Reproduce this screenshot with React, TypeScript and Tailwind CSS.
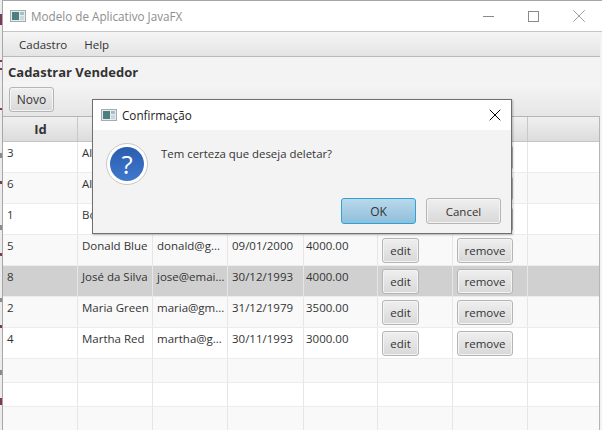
import { X } from 'lucide-react';

const sans = "font-['Open_Sans','Noto_Sans',sans-serif]";

// the first three rows sit behind the dialog, only the start of the name shows
const rows = [
  { id: '3', bg: 'bg-white', name: 'Al', mail: '', date: '', pay: '', hidden: true },
  { id: '6', bg: 'bg-[#f9f9f9]', name: 'Al', mail: '', date: '', pay: '', hidden: true },
  { id: '1', bg: 'bg-white', name: 'Bo', mail: '', date: '', pay: '', hidden: true },
  { id: '5', bg: 'bg-[#f9f9f9]', name: 'Donald Blue', mail: 'donald@g...', date: '09/01/2000', pay: '4000.00', hidden: false },
  { id: '8', bg: 'bg-[#d0d0d0]', name: 'José da Silva', mail: 'jose@emai...', date: '30/12/1993', pay: '4000.00', hidden: false },
  { id: '2', bg: 'bg-[#f9f9f9]', name: 'Maria Green', mail: 'maria@gm...', date: '31/12/1979', pay: '3500.00', hidden: false },
  { id: '4', bg: 'bg-white', name: 'Martha Red', mail: 'martha@g...', date: '30/11/1993', pay: '3000.00', hidden: false },
];

const colW = ['w-[75px]', 'w-[75px]', 'w-[75px]', 'w-[76px]', 'w-[74px]', 'w-[75px]', 'w-[75px]', 'flex-1'];

function FxButton({ label, className = '' }: { label: string; className?: string }) {
  return (
    <div
      className={`flex items-center justify-center rounded-[3px] border border-[#b5b5b5] bg-gradient-to-b from-[#efefef] to-[#d8d8d8] text-[#333] shadow-[inset_0_0_0_1px_#f4f4f4] ${className}`}
    >
      {label}
    </div>
  );
}

function AppIcon() {
  return (
    <svg width="16" height="12" viewBox="0 0 16 12">
      <rect x="0.5" y="0.5" width="15" height="11" fill="#e6ebec" stroke="#a3adb0" />
      <rect x="2" y="2" width="7" height="8" fill="#4d7f80" />
      <rect x="10" y="2" width="4" height="3" fill="#a9bccb" />
      <rect x="10" y="6" width="4" height="4" fill="#ccd6dc" />
    </svg>
  );
}

function Row({ row }: { row: (typeof rows)[number] }) {
  return (
    <div className={`flex h-[31px] ${row.bg} border-b border-[#ececec]`}>
      <div className={`${colW[0]} shrink-0 border-r border-[#e6e6e6] pl-1 pt-[2px]`}>{row.id}</div>
      <div className={`${colW[1]} shrink-0 overflow-hidden border-r border-[#e6e6e6] pl-1 pt-[2px] whitespace-nowrap`}>{row.name}</div>
      <div className={`${colW[2]} shrink-0 overflow-hidden border-r border-[#e6e6e6] pl-1 pt-[2px] whitespace-nowrap`}>{row.mail}</div>
      <div className={`${colW[3]} shrink-0 border-r border-[#e6e6e6] pl-1 pt-[2px] whitespace-nowrap`}>{row.date}</div>
      <div className={`${colW[4]} shrink-0 border-r border-[#e6e6e6] pl-[2px] pt-[2px]`}>{row.pay}</div>
      <div className={`${colW[5]} shrink-0 border-r border-[#e6e6e6] pl-1 pt-[3px]`}>
        {!row.hidden && <FxButton label="edit" className="h-[25px] w-[37px]" />}
      </div>
      <div className={`${colW[6]} shrink-0 border-r border-[#e6e6e6] pl-1 pt-[3px]`}>
        <FxButton label={row.hidden ? '' : 'remove'} className="h-[25px] w-[56px]" />
      </div>
      <div className="flex-1" />
    </div>
  );
}

function EmptyRow({ bg }: { bg: string }) {
  return (
    <div className={`flex h-[24px] ${bg} border-b border-[#ececec]`}>
      {colW.slice(0, 7).map((w, i) => (
        <div key={i} className={`${w} shrink-0 border-r border-[#e6e6e6]`} />
      ))}
    </div>
  );
}

export default function App() {
  return (
    <div className={`${sans} relative flex h-[430px] w-[602px] overflow-hidden bg-white text-[11.5px] leading-[17px] text-[#333]`}>
      {/* window behind, only a sliver shows */}
      <div className="flex w-[2px] shrink-0 flex-col bg-[#ececec]">
        <div className="mt-[14px] h-[11px] bg-[#7d3a55]" />
        <div className="mt-[35px] h-[2px] bg-[#7d3a55]" />
        <div className="mt-[6px] h-[2px] bg-[#7d3a55]" />
        <div className="mt-[38px] h-[2px] bg-[#7d3a55]" />
        <div className="mt-[43px] h-[5px] bg-[#8a8a8a]" />
        <div className="mt-[23px] h-[3px] bg-[#7d3a55]" />
        <div className="mt-[41px] h-[5px] bg-[#8a8a8a]" />
        <div className="mt-[23px] h-[3px] bg-[#7d3a55]" />
        <div className="mt-[42px] h-[4px] bg-[#8a8a8a]" />
        <div className="mt-[23px] h-[3px] bg-[#7d3a55]" />
        <div className="mt-[42px] h-[5px] bg-[#8a8a8a]" />
        <div className="mt-[23px] h-[7px] bg-[#7d3a55]" />
      </div>

      <div className="flex min-w-0 flex-1 flex-col border-t border-l border-[#a6a6a6]">
        {/* title bar */}
        <div className="flex h-[30px] shrink-0 items-center bg-white pl-[7px]">
          <AppIcon />
          <span className="ml-[5px] text-[11.7px] text-[#8e8e8e]">Modelo de Aplicativo JavaFX</span>
          <div className="ml-auto flex items-center pr-[12px]">
            <div className="h-px w-[11px] bg-[#8a8a8a]" />
            <div className="ml-[34px] h-[11px] w-[11px] border border-[#8a8a8a]" />
            <X size={22} strokeWidth={0.9} className="ml-[29px] text-[#8a8a8a]" />
          </div>
        </div>

        <div className="flex flex-1 flex-col border-t border-[#c4c4c4] bg-[#f3f3f3] pr-[2px]">
          {/* menu bar */}
          <div className="flex h-[25px] shrink-0 items-center gap-[17px] border-b border-[#b9b9b9] bg-gradient-to-b from-[#f5f5f5] to-[#e4e4e4] pt-px pl-[16px] text-[#333]">
            <span>Cadastro</span>
            <span>Help</span>
          </div>

          {/* heading */}
          <div className="flex h-[25px] shrink-0 items-center pt-[5px] pl-[5px] text-[13px] font-bold text-[#333]">Cadastrar Vendedor</div>

          {/* toolbar */}
          <div className="flex h-[35px] shrink-0 items-start border-b border-[#b5b5b5] bg-gradient-to-b from-[#f5f5f5] to-[#e6e6e6] pt-[5px] pl-[6px]">
            <FxButton label="Novo" className="h-[25px] w-[45px] text-[12px]" />
          </div>

          {/* table */}
          <div className="flex min-h-0 flex-1 flex-col overflow-hidden border-r border-b border-[#b5b5b5] bg-white">
            <div className="flex h-[25px] shrink-0 border-b border-[#c4c4c4] bg-gradient-to-b from-[#f0f0f0] to-[#dcdcdc] text-[13px] font-bold">
              <div className={`${colW[0]} shrink-0 border-r border-[#c8c8c8] pt-[4px] pl-px text-center`}>Id</div>
              {colW.slice(1, 7).map((w, i) => (
                <div key={i} className={`${w} shrink-0 border-r border-[#c8c8c8]`} />
              ))}
            </div>
            {rows.map((row) => (
              <Row key={row.id} row={row} />
            ))}
            <EmptyRow bg="bg-[#f9f9f9]" />
            <EmptyRow bg="bg-white" />
            <EmptyRow bg="bg-[#f9f9f9]" />
          </div>
        </div>
      </div>

      {/* dialog */}
      <div className="absolute top-[99px] left-[92px] flex h-[135px] w-[420px] flex-col border border-[#6f6f6f] bg-[#f3f3f3] shadow-[1px_1px_2px_rgba(0,0,0,0.25)]">
        <div className="flex h-[30px] shrink-0 items-center bg-white pl-[8px]">
          <AppIcon />
          <span className="ml-[5px] text-[11.7px] text-[#222]">Confirmação</span>
          <X size={20} strokeWidth={1.2} className="mr-[6px] ml-auto text-black" />
        </div>
        <div className="flex flex-1 flex-col">
          <div className="flex pt-[13px] pl-[13px]">
            <div className="flex h-[42px] w-[42px] items-center justify-center rounded-full border border-[#c9c9c9] bg-white">
              <div className="flex h-[34px] w-[34px] items-center justify-center rounded-full bg-gradient-to-b from-[#2a5db0] to-[#3f78cc] text-[26px] leading-none text-white">?</div>
            </div>
            <div className="ml-[13px] pt-[2px] text-[11.4px] text-[#333]">Tem certeza que deseja deletar?</div>
          </div>
          <div className="mt-auto flex justify-end gap-[10px] pr-[10px] pb-[9px]">
            <FxButton label="OK" className="h-[26px] w-[75px] !border-[#2ea3d6] !from-[#b9d8ea] !to-[#8fbfdc] !shadow-none text-[12px]" />
            <FxButton label="Cancel" className="h-[26px] w-[75px]" />
          </div>
        </div>
      </div>
    </div>
  );
}
